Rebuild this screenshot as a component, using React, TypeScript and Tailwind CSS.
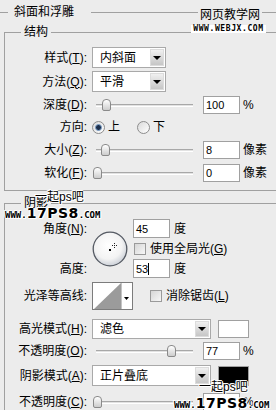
import React from 'react';

const halo =
  '[text-shadow:1px_0_0_#fff,-1px_0_0_#fff,0_1px_0_#fff,0_-1px_0_#fff,1px_1px_0_#fff,-1px_-1px_0_#fff]';

function U({ c }: { c: string }) {
  return <span className="underline underline-offset-[1px]">{c}</span>;
}

function Label({ children }: { children: React.ReactNode }) {
  return <div className="w-[82px] shrink-0 text-right whitespace-nowrap">{children}</div>;
}

function Select({ value, w }: { value: string; w: string }) {
  return (
    <div className={`${w} h-full flex items-center border border-[#a9a9a9] bg-white`}>
      <span className="flex-1 pl-[7px] whitespace-nowrap">{value}</span>
      <div className="w-[14px] h-[calc(100%-2px)] mr-px flex items-center justify-center bg-linear-to-b from-[#f0f0f0] to-[#c6c6c6] border border-[#dcdcdc]">
        <div className="w-0 h-0 border-l-[4px] border-r-[4px] border-t-[4px] border-l-transparent border-r-transparent border-t-black" />
      </div>
    </div>
  );
}

function Field({ value, cursor }: { value: string; cursor?: boolean }) {
  return (
    <div className="w-[37px] h-full flex items-center border border-[#a0a0a0] bg-white pl-[2px] text-[11px] font-['Liberation_Sans',sans-serif]">
      {value}
      {cursor && <span className="inline-block w-px h-[12px] bg-black" />}
    </div>
  );
}

function Slider({ left }: { left: string }) {
  return (
    <div className="relative w-[101px] h-full flex items-center">
      <div className="ml-[4px] flex-1 h-[3px] border-t border-t-[#a8a8a8] bg-[#e2e2e2] border-b border-b-white" />
      <div
        className={`absolute top-1/2 -translate-y-1/2 ${left} w-[9px] h-[12px] rounded-t-[4px] rounded-b-[2px] border border-[#8a8a8a] bg-linear-to-b from-white to-[#cdcdcd]`}
      />
    </div>
  );
}

function Check() {
  return <div className="w-[12px] h-[12px] shrink-0 border border-[#9a9a9a] bg-linear-to-br from-[#d6d6d6] to-[#f7f7f7]" />;
}

function Radio({ on }: { on?: boolean }) {
  return (
    <div className="w-[13px] h-[13px] rounded-full border border-[#8c8c8c] bg-linear-to-br from-[#dadada] to-white flex items-center justify-center">
      {on && <div className="w-[7px] h-[7px] rounded-full bg-[#1c2f4c] border border-[#7fa3cc]" />}
    </div>
  );
}

function Legend({ text }: { text: string }) {
  return <legend className="ml-[16px] px-[3px] leading-[14px]">{text}</legend>;
}

function Mark17({ className }: { className: string }) {
  return (
    <div className={`absolute flex items-end leading-none text-black ${halo} ${className}`}>
      <span className="text-[9px] font-bold font-['DejaVu_Sans_Mono',monospace]">WWW.</span>
      <span className="text-[14px] font-bold tracking-[0.5px] font-['DejaVu_Sans',sans-serif]">17PS8</span>
      <span className="text-[9px] font-bold font-['DejaVu_Sans_Mono',monospace]">.COM</span>
    </div>
  );
}

export default function App() {
  return (
    <div className="relative w-[276px] h-[410px] overflow-hidden bg-[#ececec] text-[12px] leading-[14px] text-black font-['Liberation_Sans','Noto_Sans_CJK_SC',sans-serif]">
      {/* 斜面和浮雕 header */}
      <div className="mt-[5px] h-[14px] flex items-center">
        <div className="w-[8px] h-px bg-[#a0a0a0]" />
        <span className="ml-[6px]">斜面和浮雕</span>
        <div className="ml-[17px] flex-1 h-px bg-[#a0a0a0]" />
      </div>

      {/* 结构 */}
      <fieldset className="mt-[6px] ml-[4px] border-t border-l border-b border-[#a0a0a0]">
        <Legend text="结构" />
        <div className="pt-[8px] pb-[8px] flex flex-col">
          <div className="h-[21px] flex items-center">
            <Label>样式(<U c="T" />):</Label>
            <div className="ml-[5px] h-full"><Select value="内斜面" w="w-[74px]" /></div>
          </div>
          <div className="mt-[3px] h-[21px] flex items-center">
            <Label>方法(<U c="Q" />):</Label>
            <div className="ml-[5px] h-full"><Select value="平滑" w="w-[74px]" /></div>
          </div>
          <div className="mt-[4px] h-[18px] flex items-center">
            <Label>深度(<U c="D" />):</Label>
            <div className="ml-[5px] h-full"><Slider left="left-[10px]" /></div>
            <div className="ml-[10px] h-full"><Field value="100" /></div>
            <span className="ml-[3px]">%</span>
          </div>
          <div className="mt-[4px] h-[18px] flex items-center">
            <Label>方向:</Label>
            <div className="ml-[5px]"><Radio on /></div>
            <span className="ml-[3px]">上</span>
            <div className="ml-[17px]"><Radio /></div>
            <span className="ml-[3px]">下</span>
          </div>
          <div className="mt-[5px] h-[18px] flex items-center">
            <Label>大小(<U c="Z" />):</Label>
            <div className="ml-[5px] h-full"><Slider left="left-[9px]" /></div>
            <div className="ml-[10px] h-full"><Field value="8" /></div>
            <span className="ml-[3px]">像素</span>
          </div>
          <div className="mt-[5px] h-[18px] flex items-center">
            <Label>软化(<U c="F" />):</Label>
            <div className="ml-[5px] h-full"><Slider left="left-[1px]" /></div>
            <div className="ml-[10px] h-full"><Field value="0" /></div>
            <span className="ml-[3px]">像素</span>
          </div>
        </div>
      </fieldset>

      {/* 阴影 */}
      <fieldset className="mt-[5px] ml-[4px] border-t border-l border-[#a0a0a0]">
        <Legend text="阴影" />
        <div className="pt-[9px] flex flex-col">
          <div className="h-[59px] flex items-center">
            <div className="h-full flex flex-col justify-between">
              <div className="h-[19px] flex items-center"><Label>角度(<U c="N" />):</Label></div>
              <div className="h-[19px] flex items-center"><Label>高度:</Label></div>
            </div>
            <svg className="ml-[5px]" width="36" height="36" viewBox="0 0 36 36">
              <defs>
                <radialGradient id="dial" cx="45%" cy="40%" r="62%">
                  <stop offset="0" stopColor="#ffffff" />
                  <stop offset="0.65" stopColor="#f3f3f3" />
                  <stop offset="1" stopColor="#c9ced6" />
                </radialGradient>
              </defs>
              <circle cx="18" cy="18" r="16.8" fill="url(#dial)" stroke="#555a63" strokeWidth="1.3" />
              <rect x="17" y="18" width="2" height="2" fill="#000" />
              <path d="M22.5 12v5M20 14.5h5" stroke="#222" strokeWidth="1" strokeDasharray="1 1" />
            </svg>
            <div className="ml-[5px] h-full flex flex-col">
              <div className="h-[19px] flex items-center">
                <div className="h-full"><Field value="45" /></div>
                <span className="ml-[4px]">度</span>
              </div>
              <div className="mt-[5px] h-[12px] flex items-center">
                <div className="ml-[1px]"><Check /></div>
                <span className="ml-[4px] whitespace-nowrap">使用全局光(<U c="G" />)</span>
              </div>
              <div className="mt-[4px] h-[19px] flex items-center">
                <div className="h-full"><Field value="53" cursor /></div>
                <span className="ml-[4px]">度</span>
              </div>
            </div>
          </div>

          <div className="mt-[4px] h-[28px] flex items-center">
            <Label>光泽等高线:</Label>
            <svg className="ml-[5px]" width="41" height="28" viewBox="0 0 41 28">
              <rect x="0.5" y="0.5" width="40" height="27" fill="#fff" stroke="#7c7c7c" />
              <polygon points="2,27 29,1 29,27" fill="#9b9b9b" />
              <line x1="29.5" y1="1" x2="29.5" y2="27" stroke="#c4c4c4" />
              <polygon points="32,15 37,15 34.5,18" fill="#000" />
            </svg>
            <div className="ml-[17px]"><Check /></div>
            <span className="ml-[4px] whitespace-nowrap">消除锯齿(<U c="L" />)</span>
          </div>

          <div className="mt-[9px] h-[20px] flex items-center">
            <Label>高光模式(<U c="H" />):</Label>
            <div className="ml-[5px] h-full"><Select value="滤色" w="w-[119px]" /></div>
            <div className="ml-[7px] w-[31px] h-[18px] border border-[#a0a0a0] bg-white" />
          </div>
          <div className="mt-[3px] h-[18px] flex items-center">
            <Label>不透明度(<U c="O" />):</Label>
            <div className="ml-[5px] h-full"><Slider left="left-[75px]" /></div>
            <div className="ml-[10px] h-full"><Field value="77" /></div>
            <span className="ml-[3px]">%</span>
          </div>
          <div className="mt-[5px] h-[21px] flex items-center">
            <Label>阴影模式(<U c="A" />):</Label>
            <div className="ml-[5px] h-full"><Select value="正片叠底" w="w-[119px]" /></div>
            <div className="ml-[7px] w-[31px] h-[20px] border border-[#a0a0a0] bg-black" />
          </div>
          <div className="mt-[7px] h-[18px] flex items-center">
            <Label>不透明度(<U c="C" />):</Label>
            <div className="ml-[5px] h-full"><Slider left="left-[1px]" /></div>
            <div className="ml-[10px] h-full"><Field value="" /></div>
            <span className="ml-[3px]">%</span>
          </div>
        </div>
      </fieldset>

      {/* watermarks */}
      <div className="absolute left-[198px] top-[8px] px-[2px] bg-[#ececec] text-[12px] leading-[14px] whitespace-nowrap">网页教学网</div>
      <div className="absolute left-[191px] top-[25px] w-[75px] h-[8px] bg-white flex items-center justify-center text-[8px] leading-none font-bold tracking-[0.6px] font-['DejaVu_Sans_Mono',monospace]">
        WWW.WEBJX.COM
      </div>

      <div className={`absolute left-[35px] top-[190px] text-[12px] leading-[14px] whitespace-nowrap ${halo}`}>一起ps吧</div>
      <Mark17 className="left-[5px] top-[206px]" />

      <div className={`absolute left-[199px] top-[380px] text-[12px] leading-[14px] whitespace-nowrap ${halo}`}>一起ps吧</div>
      <Mark17 className="left-[174px] top-[396px]" />
    </div>
  );
}
